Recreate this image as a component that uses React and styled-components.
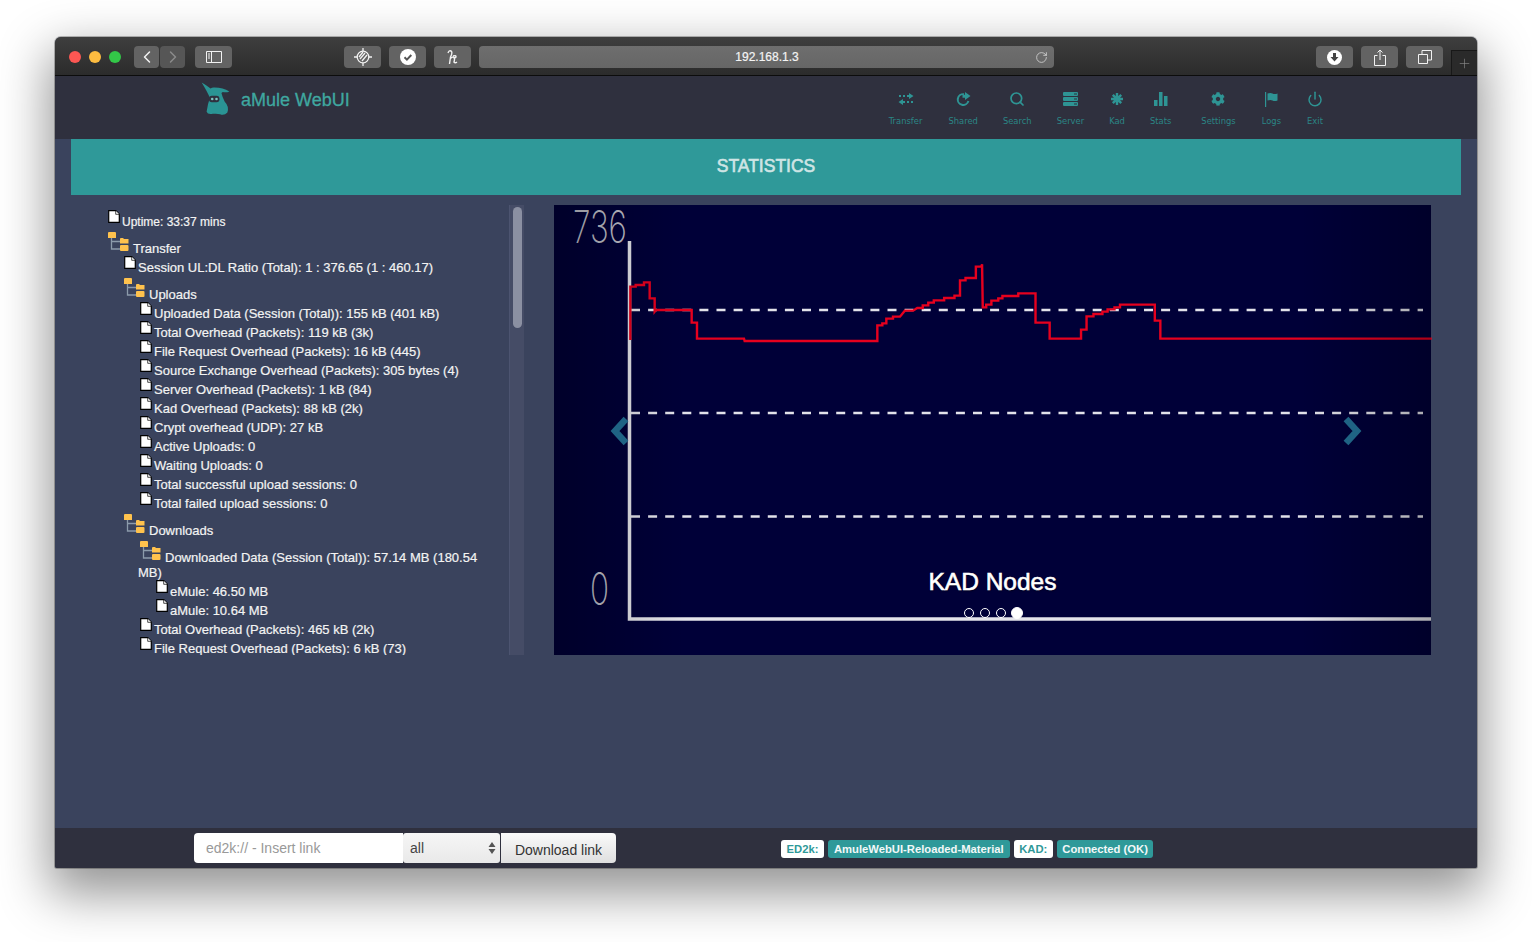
import styled, { createGlobalStyle } from "styled-components";
import { ChevronLeft, ChevronRight, RotateCw, Search as SearchIcon, Power, Plus } from "lucide-react";
import { FaCog } from "react-icons/fa";

const GlobalStyle = createGlobalStyle`
  html, body {
    margin: 0;
    background: #fff;
    font-family: "Liberation Sans", Arial, sans-serif;
  }
`;

const Page = styled.div`
  width: 1532px;
  height: 942px;
  padding: 37px 55px 0;
  box-sizing: border-box;
  overflow: hidden;
`;

const Window = styled.div`
  width: 1422px;
  height: 831px;
  display: flex;
  flex-direction: column;
  border-radius: 6px 6px 2px 2px;
  overflow: hidden;
  background: #3a435d;
  box-shadow: 0 20px 50px 6px rgba(0, 0, 0, 0.42), 0 0 0 1px rgba(0, 0, 0, 0.25);
`;

/* safari toolbar */
const TitleBar = styled.div`
  height: 39px;
  flex: none;
  display: flex;
  align-items: flex-start;
  box-sizing: border-box;
  padding: 9px 0 0 14px;
  background: linear-gradient(#3e3e3e, #2b2b2b);
  border-bottom: 1px solid #0c0c0c;
`;

const Lights = styled.div`
  display: flex;
  gap: 8px;
  margin: 5px 13px 0 0;
`;

const Light = styled.span`
  width: 12px;
  height: 12px;
  border-radius: 50%;
  background: ${(p) => p.$color};
`;

const ToolGroup = styled.div`
  display: flex;
  gap: ${(p) => p.$gap ?? 8}px;
  margin-right: ${(p) => p.$after ?? 0}px;
`;

const ToolButton = styled.div`
  width: ${(p) => p.$w ?? 37}px;
  height: 22px;
  display: flex;
  align-items: center;
  justify-content: center;
  border-radius: 4px;
  background: ${(p) => (p.$dim ? "#565656" : "#636363")};
  color: ${(p) => (p.$dim ? "#8b8b8b" : "#f2f2f2")};
`;

const UrlBar = styled.div`
  width: 575px;
  height: 22px;
  margin-right: 262px;
  padding-right: 6px;
  box-sizing: border-box;
  display: flex;
  align-items: center;
  border-radius: 4px;
  background: linear-gradient(#6e6e6e, #666);
  color: #f4f4f4;
  font-size: 12px;
`;

const UrlText = styled.span`
  flex: 1;
  text-align: center;
  padding-left: 20px;
  -webkit-text-stroke: 0.2px #f4f4f4;
`;

const NewTab = styled.div`
  width: 26px;
  height: 25px;
  margin: 4px 0 0 8px;
  display: flex;
  align-items: center;
  justify-content: center;
  box-sizing: border-box;
  background: #2a2a2a;
  border: 1px solid #181818;
  border-width: 1px 0 0 1px;
  color: #8d8d8d;
`;

/* app header */
const Header = styled.header`
  height: 63px;
  flex: none;
  display: flex;
  justify-content: space-between;
  align-items: flex-start;
  box-sizing: border-box;
  padding: 0 154px 0 146px;
  background: #2f303e;
`;

const Brand = styled.div`
  display: flex;
  align-items: center;
  gap: 9px;
  padding-top: 5px;
  color: #3fa8a0;
  font-size: 18px;
  -webkit-text-stroke: 0.3px #3fa8a0;
`;

const Nav = styled.nav`
  display: flex;
  padding-top: 14px;
`;

const NavItem = styled.div`
  display: flex;
  flex-direction: column;
  align-items: center;
  margin-left: ${(p) => p.$gap ?? 25}px;
  color: #2e9494;
  font-family: "DejaVu Sans", sans-serif;
  font-size: 8.4px;
`;

const NavIcon = styled.div`
  height: 18px;
  display: flex;
  align-items: center;
  justify-content: center;
`;

const NavLabel = styled.span`
  margin-top: 8px;
  line-height: 11px;
  color: #2b8686;
`;

const TitleBand = styled.h1`
  flex: none;
  height: 56px;
  margin: 0 16px;
  padding-bottom: 2px;
  box-sizing: border-box;
  display: flex;
  align-items: center;
  justify-content: center;
  background: #2f9999;
  color: #cfe5e5;
  font-size: 17.5px;
  font-weight: normal;
  -webkit-text-stroke: 0.6px #cfe5e5;
`;

const Main = styled.main`
  flex: 1;
  display: flex;
  align-items: flex-start;
  padding: 10px 0 0 51px;
`;

/* statistics tree */
const TreePane = styled.div`
  width: 403px;
  height: 450px;
  overflow: hidden;
  box-sizing: border-box;
  padding: 5px 10px 0 0;
  color: #f3f3f3;
  font-size: 13px;
  line-height: 15px;
  -webkit-text-stroke: 0.2px #f3f3f3;
`;

const Row = styled.div`
  padding-left: ${(p) => p.$level * 16}px;
  font-size: ${(p) => (p.$small ? 12 : 13)}px;
  margin-bottom: ${(p) => (p.$small ? -1 : 0)}px;
`;

const FileGlyph = styled.svg`
  width: 12px;
  height: 13px;
  margin-left: 2px;
  margin-right: 2px;
  vertical-align: 3px;
`;

const FolderGlyph = styled.svg`
  width: 21px;
  height: 20px;
  margin: 3px 4px 0 2px;
  vertical-align: 1px;
`;

const ScrollTrack = styled.div`
  width: 15px;
  height: 450px;
  flex: none;
  box-sizing: border-box;
  padding: 2px 2px 0 3px;
  background: #454c66;
  border-left: 1px solid #4c5470;
`;

const ScrollThumb = styled.div`
  width: 9px;
  height: 121px;
  border-radius: 5px;
  background: #8b90a2;
`;

/* chart carousel */
const Carousel = styled.div`
  position: relative;
  width: 877px;
  height: 450px;
  flex: none;
  margin-left: 30px;
  background: #000038;
`;

const ChartSvg = styled.svg`
  display: block;
  overflow: visible;
`;

const Control = styled.div`
  position: absolute;
  top: 0;
  bottom: 0;
  ${(p) => p.$side}: 0;
  width: 15%;
  display: flex;
  align-items: center;
  justify-content: center;
  padding-top: 2px;
  box-sizing: border-box;
  padding-${(p) => (p.$side === "right" ? "right" : "left")}: ${(p) => (p.$side === "right" ? 26 : 0)}px;
  background: linear-gradient(
    to ${(p) => p.$side},
    rgba(0, 0, 0, 0),
    rgba(0, 0, 0, 0.25)
  );
`;

const Caption = styled.div`
  position: absolute;
  left: 0;
  right: 0;
  top: 362px;
  text-align: center;
  color: #fff;
  font-size: 24.5px;
  line-height: 30px;
  -webkit-text-stroke: 0.6px #fff;
  text-shadow: 0 1px 2px rgba(0, 0, 0, 0.6);
`;

const Indicators = styled.div`
  position: absolute;
  top: 403px;
  left: 410px;
  display: flex;
  align-items: center;
  gap: 6px;
`;

const Dot = styled.span`
  width: ${(p) => (p.$active ? 12 : 10)}px;
  height: ${(p) => (p.$active ? 12 : 10)}px;
  margin: ${(p) => (p.$active ? -1 : 0)}px;
  box-sizing: border-box;
  border-radius: 50%;
  border: 1px solid #fff;
  background: ${(p) => (p.$active ? "#fff" : "transparent")};
`;

/* footer */
const Footer = styled.footer`
  height: 40px;
  flex: none;
  display: flex;
  align-items: flex-start;
  box-sizing: border-box;
  padding: 5px 0 0 139px;
  background: #2f303e;
`;

const LinkInput = styled.input`
  width: 209px;
  height: 30px;
  box-sizing: border-box;
  padding: 0 12px;
  border: 0;
  border-radius: 4px 0 0 4px;
  background: #fff;
  font: 14px "Liberation Sans", Arial, sans-serif;
  &::placeholder {
    color: #999;
    opacity: 1;
  }
`;

const CategorySelect = styled.div`
  width: 97px;
  height: 30px;
  box-sizing: border-box;
  padding: 0 4px 0 7px;
  display: flex;
  align-items: center;
  justify-content: space-between;
  border-radius: 3px;
  background: linear-gradient(#f6f6f6, #e9e9e9);
  color: #444;
  font-size: 14px;
`;

const DownloadButton = styled.button`
  width: 115px;
  height: 30px;
  margin-left: 1px;
  padding: 3px 0 0;
  border: 0;
  border-radius: 0 4px 4px 0;
  background: linear-gradient(#fafafa, #dfdfdf);
  color: #333;
  font: 14px "Liberation Sans", Arial, sans-serif;
`;

const Badges = styled.div`
  display: flex;
  gap: 4px;
  margin: 7px 0 0 165px;
`;

const Badge = styled.span`
  height: 18px;
  padding: 0 ${(p) => p.$pad ?? 5.5}px;
  display: flex;
  align-items: center;
  border-radius: 3px;
  background: ${(p) => (p.$light ? "#fff" : "#2f9999")};
  color: ${(p) => (p.$light ? "#2f9999" : "#f2f8f8")};
  font-size: 11.25px;
  font-weight: bold;
`;

const FileIcon = () => (
  <FileGlyph viewBox="0 0 12 13">
    <path d="M.7.7h7l3.6 3.6v8H.7z" fill="#fff" stroke="#000" strokeWidth="1.2" />
    <path d="M7.7.7v3.6h3.6" fill="#fff" stroke="#000" strokeWidth=".7" />
  </FileGlyph>
);

const FolderIcon = () => (
  <FolderGlyph viewBox="0 0 21 20">
    <path d="M3.5 5v12H12M3.500 9.500H12" fill="none" stroke="#8c9bab" strokeWidth="1.3" />
    <path d="M0 1q0-1 1-1h6q1 0 1 1v5H0z" fill="#ffc24d" />
    <path d="M12 7q0-1 1-1h2l1 1h4.500v4.500H12z" fill="#ffc24d" />
    <path d="M12 14q0-1 1-1h6.500q1 0 1 1v4q0 1-1 1H13q-1 0-1-1z" fill="#ffc24d" />
  </FolderGlyph>
);

const treeRows = [
  [0, "file", "Uptime: 33:37 mins", true],
  [0, "folder", "Transfer"],
  [1, "file", "Session UL:DL Ratio (Total): 1 : 376.65 (1 : 460.17)"],
  [1, "folder", "Uploads"],
  [2, "file", "Uploaded Data (Session (Total)): 155 kB (401 kB)"],
  [2, "file", "Total Overhead (Packets): 119 kB (3k)"],
  [2, "file", "File Request Overhead (Packets): 16 kB (445)"],
  [2, "file", "Source Exchange Overhead (Packets): 305 bytes (4)"],
  [2, "file", "Server Overhead (Packets): 1 kB (84)"],
  [2, "file", "Kad Overhead (Packets): 88 kB (2k)"],
  [2, "file", "Crypt overhead (UDP): 27 kB"],
  [2, "file", "Active Uploads: 0"],
  [2, "file", "Waiting Uploads: 0"],
  [2, "file", "Total successful upload sessions: 0"],
  [2, "file", "Total failed upload sessions: 0"],
  [1, "folder", "Downloads"],
  [2, "folder", "Downloaded Data (Session (Total)): 57.14 MB (180.54 MB)"],
  [3, "file", "eMule: 46.50 MB"],
  [3, "file", "aMule: 10.64 MB"],
  [2, "file", "Total Overhead (Packets): 465 kB (2k)"],
  [2, "file", "File Request Overhead (Packets): 6 kB (73)"],
];

// traced from the graph
const lineA = [
  [229, 405], [229, 245], [245, 245], [245, 240], [270, 240], [270, 232], [287, 232], [287, 280],
  [302, 280], [302, 320], [306, 315], [413, 315], [413, 353], [429, 353], [429, 401], [570, 401],
  [572, 408], [970, 408], [970, 361], [985, 361], [985, 355], [997, 355], [997, 341], [1017, 341],
  [1017, 335], [1038, 335],
];
const lineB = [
  [0, 200], [14, 182], [38, 182], [50, 174], [66, 174], [66, 166], [82, 166], [82, 158], [98, 158],
  [98, 151], [128, 151], [128, 144], [158, 144], [158, 137], [174, 137], [174, 91], [190, 91],
  [190, 84], [220, 84], [220, 50], [236, 50], [238, 43], [240, 172], [250, 172], [250, 164],
  [265, 164], [265, 152], [285, 152], [285, 145], [297, 145], [297, 138], [343, 138], [343, 130],
  [393, 130], [393, 218], [434, 218], [434, 266], [525, 266], [525, 239], [541, 239], [541, 199],
  [561, 199], [561, 192], [587, 192], [587, 185], [602, 185], [602, 178], [622, 178], [622, 172],
  [638, 172], [638, 164], [739, 164], [739, 212], [755, 212], [755, 266], [1542, 266],
];
const redLine = [
  ...lineA.map(([x, y]) => `${x / 3},${y / 3}`),
  ...lineB.map(([x, y]) => `${346 + x / 2.9},${45 + y / 3}`),
].join(" ");

const navItems = [
  {
    label: "Transfer",
    gap: 0,
    icon: (
      <svg width="16" height="12" viewBox="0 0 16 12" fill="currentColor">
        <path d="M11 0l4.5 3L11 6V4H9V2h2zM5 6l-4.5 3L5 12v-2h2V8H5zM1 2h2v2H1zM5 2h2v2H5zM9 8h2v2H9zM13 8h2v2h-2z" />
      </svg>
    ),
  },
  {
    label: "Shared",
    gap: 26,
    icon: (
      <svg width="15" height="14" viewBox="0 0 15 14" fill="none" stroke="currentColor" strokeWidth="2">
        <path d="M8 2.2A5.4 5.4 0 1 0 12.4 9" />
        <path d="M9 0l5.5 4L9 8V5.8H6.5v-3H9z" fill="currentColor" stroke="none" />
      </svg>
    ),
  },
  { label: "Search", icon: <SearchIcon size={16} strokeWidth={2.6} /> },
  {
    label: "Server",
    icon: (
      <svg width="15" height="14" viewBox="0 0 15 14" fill="currentColor" fillRule="evenodd">
        <path d="M1 0h13q1 0 1 1v2q0 1-1 1H1q-1 0-1-1V1q0-1 1-1zm10 1.5v1h3v-1zM1 5h13q1 0 1 1v2q0 1-1 1H1q-1 0-1-1V6q0-1 1-1zm10 1.5v1h3v-1zM1 10h13q1 0 1 1v2q0 1-1 1H1q-1 0-1-1v-2q0-1 1-1zm10 1.5v1h3v-1z" />
      </svg>
    ),
  },
  {
    label: "Kad",
    icon: (
      <svg width="12" height="12" viewBox="0 0 12 12" fill="currentColor" stroke="currentColor" strokeWidth="2.4">
        <path d="M6 0v12M0 6h12M1.800 1.800l8.400 8.400M10.200 1.800l-8.400 8.400" />
        <circle cx="6" cy="6" r="2.500" stroke="none" />
      </svg>
    ),
  },
  {
    label: "Stats",
    icon: (
      <svg width="14" height="14" viewBox="0 0 14 14" fill="currentColor">
        <path d="M0 8h3.5v6H0zM5 0h3.5v14H5zM10 4h3.5v10H10z" />
      </svg>
    ),
  },
  { label: "Settings", gap: 30, icon: <FaCog size={14} /> },
  {
    label: "Logs",
    gap: 26,
    icon: (
      <svg width="13" height="15" viewBox="0 0 13 15" fill="currentColor">
        <path d="M0 0h1.2v15H0zM2.5 1.5q3-1 5 0t5 0v7q-3 1-5 0t-5 0z" />
      </svg>
    ),
  },
  { label: "Exit", gap: 26, icon: <Power size={16} strokeWidth={2.2} /> },
];

const Chevron = ({ flip }) => (
  <svg width="20" height="30" viewBox="0 0 20 30">
    <path
      d={flip ? "M4 3l11 12L4 27" : "M16 3L5 15l11 12"}
      fill="none"
      stroke="#1f6384"
      strokeWidth="6.5"
    />
  </svg>
);

function Chart() {
  return (
    <ChartSvg width="877" height="450" viewBox="0 0 877 450">
      {[105, 208, 311.5].map((y) => (
        <line key={y} x1="77" x2="869" y1={y} y2={y} stroke="#e2e2ea" strokeWidth="2.5" strokeDasharray="9 8.1" />
      ))}
      <path d="M75.5 36V414H877" fill="none" stroke="#e4e4ea" strokeWidth="3.5" />
      <polyline points={redLine} fill="none" stroke="#e6001e" strokeWidth="2.4" />
      <text
        transform="translate(19 38) scale(.7 1)"
        fontFamily="Inter, sans-serif"
        fontWeight="200"
        fontSize="45"
        fill="#c2c2cc"
      >
        736
      </text>
      <text
        transform="translate(36 400) scale(.7 1)"
        fontFamily="Inter, sans-serif"
        fontWeight="200"
        fontSize="45"
        fill="#c2c2cc"
      >
        0
      </text>
    </ChartSvg>
  );
}

function App() {
  return (
    <Page>
      <GlobalStyle />
      <Window>
        <TitleBar>
          <Lights>
            <Light $color="#fc5753" />
            <Light $color="#fdbc40" />
            <Light $color="#33c748" />
          </Lights>
          <ToolGroup $gap={1} $after={10}>
            <ToolButton $w={25}>
              <ChevronLeft size={20} strokeWidth={1.8} />
            </ToolButton>
            <ToolButton $w={25} $dim>
              <ChevronRight size={20} strokeWidth={1.8} />
            </ToolButton>
          </ToolGroup>
          <ToolGroup $after={112}>
            <ToolButton>
              <svg width="16" height="12" viewBox="0 0 16 12" fill="none" stroke="currentColor">
                <path d="M.5.5h15v11H.5zM5.5.5v11" />
                <path d="M2 3h2M2 5h2M2 7h2" />
              </svg>
            </ToolButton>
          </ToolGroup>
          <ToolGroup $after={8}>
            <ToolButton>
              <svg width="18" height="18" viewBox="0 0 18 18" fill="none" stroke="currentColor" strokeWidth="1.3">
                <circle cx="9" cy="9" r="5.8" />
                <path d="M9 0v3M9 15v3M0 9h3M15 9h3M6 11l5-6M8 13l5-6M5 9l4-5" />
              </svg>
            </ToolButton>
            <ToolButton>
              <svg width="16" height="16" viewBox="0 0 16 16">
                <circle cx="8" cy="8" r="8" fill="#fff" />
                <path d="M4.5 8.2l2.4 2.4 4.4-4.6" fill="none" stroke="#555" strokeWidth="2" />
              </svg>
            </ToolButton>
            <ToolButton>
              <svg width="13" height="15" viewBox="0 0 13 15" fill="none" stroke="currentColor" strokeWidth="1.4">
                <path d="M2 3q1-3 3-2t-.5 6L3.500 14M4 9q3-3 4-1.500T8 12q1 1.500 3 0M7 6q3-1 3 .5T7.500 8" />
              </svg>
            </ToolButton>
          </ToolGroup>
          <UrlBar>
            <UrlText>192.168.1.3</UrlText>
            <RotateCw size={13} strokeWidth={1.4} color="#dcdcdc" />
          </UrlBar>
          <ToolGroup>
            <ToolButton>
              <svg width="15" height="15" viewBox="0 0 15 15">
                <circle cx="7.500" cy="7.500" r="7.500" fill="#fff" />
                <path d="M6 3h3v4h2.500l-4 4.500-4-4.500H6z" fill="#444" />
              </svg>
            </ToolButton>
            <ToolButton>
              <svg width="12" height="17" viewBox="0 0 12 17" fill="none" stroke="currentColor">
                <path d="M3.500 6.500h-3v10h11v-10h-3M6 11V1M3.500 3.500L6 1l2.500 2.500" />
              </svg>
            </ToolButton>
            <ToolButton>
              <svg width="14" height="14" viewBox="0 0 14 14" fill="none" stroke="currentColor">
                <path d="M.5 4.500h9v9h-9zM4 4.500V.5h9.500v9.500H9.500" />
              </svg>
            </ToolButton>
          </ToolGroup>
          <NewTab>
            <Plus size={15} strokeWidth={1} />
          </NewTab>
        </TitleBar>

        <Header>
          <Brand>
            <svg width="31" height="38" viewBox="36 18 94 114">
              <path
                d="M38 22q14 8 27 18 5-4 12-3 26 0 45 12-8 4-20 2l-4 3q3 14 10 26 14 14 8 33-10 10-22 5-8-2-22-1-16 3-19-6 3-24 10-42-6-16-25-47z"
                fill="#2a9494"
              />
              <rect x="60" y="62" width="32" height="20" rx="9" fill="#2f303e" />
              <circle cx="70" cy="72" r="4" fill="#7fc4c0" />
              <circle cx="83" cy="72" r="4" fill="#7fc4c0" />
            </svg>
            aMule WebUI
          </Brand>
          <Nav>
            {navItems.map((item) => (
              <NavItem key={item.label} $gap={item.gap}>
                <NavIcon>{item.icon}</NavIcon>
                <NavLabel>{item.label}</NavLabel>
              </NavItem>
            ))}
          </Nav>
        </Header>

        <TitleBand>STATISTICS</TitleBand>

        <Main>
          <TreePane>
            {treeRows.map(([level, kind, text, small]) => (
              <Row key={text} $level={level} $small={small}>
                {kind === "file" ? <FileIcon /> : <FolderIcon />}
                {text}
              </Row>
            ))}
          </TreePane>
          <ScrollTrack>
            <ScrollThumb />
          </ScrollTrack>
          <Carousel>
            <Chart />
            <Control $side="left">
              <Chevron />
            </Control>
            <Control $side="right">
              <Chevron flip />
            </Control>
            <Caption>KAD Nodes</Caption>
            <Indicators>
              <Dot />
              <Dot />
              <Dot />
              <Dot $active />
            </Indicators>
          </Carousel>
        </Main>

        <Footer>
          <LinkInput placeholder="ed2k:// - Insert link" />
          <CategorySelect>
            all
            <svg width="8" height="12" viewBox="0 0 8 12" fill="#555">
              <path d="M4 0l3.500 5H.5zM4 12L.5 7h7z" />
            </svg>
          </CategorySelect>
          <DownloadButton>Download link</DownloadButton>
          <Badges>
            <Badge $light>ED2k:</Badge>
            <Badge $pad={6}>AmuleWebUI-Reloaded-Material</Badge>
            <Badge $light>KAD:</Badge>
            <Badge>Connected (OK)</Badge>
          </Badges>
        </Footer>
      </Window>
    </Page>
  );
}

export default App;
